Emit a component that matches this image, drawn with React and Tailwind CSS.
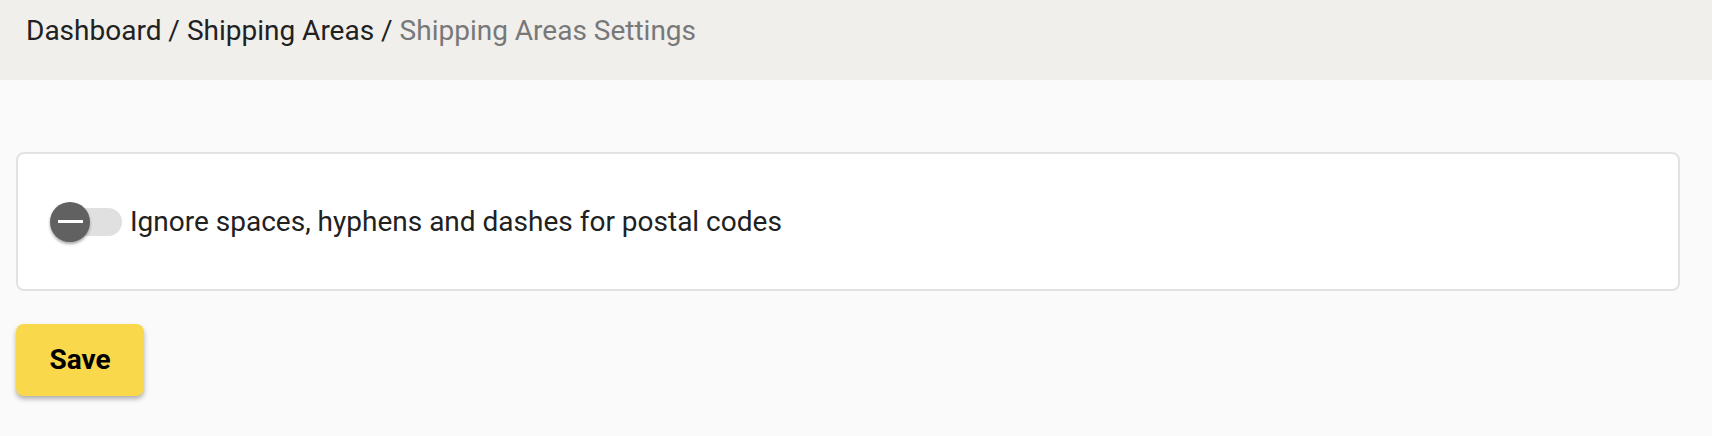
export default function App() {
  return (
    <div className="min-h-[436px] bg-[#fafafa] font-['Roboto',sans-serif]">
      {/* Breadcrumb bar */}
      <div className="h-20 bg-[#f0efec] pl-[26px] pt-[10px] text-[28px] leading-[42px]">
        <span className="text-[#212121]">Dashboard</span>
        <span className="text-[#212121]"> / </span>
        <span className="text-[#212121]">Shipping Areas</span>
        <span className="text-[#212121]"> / </span>
        <span className="text-[#787878]">Shipping Areas Settings</span>
      </div>

      <div className="pl-4 pr-8 pt-[72px]">
        {/* Settings card */}
        <div className="flex h-[139px] items-center rounded-lg border-2 border-[#e2e2e2] bg-white pl-8">
          <div className="relative h-10 w-[72px] shrink-0">
            <div className="absolute left-[6px] top-[6px] h-7 w-[66px] rounded-full bg-[#e0e0e0]" />
            <div className="absolute left-0 top-0 flex h-10 w-10 items-center justify-center rounded-full bg-[#616161] shadow-[0_2px_3px_rgba(0,0,0,0.35)]">
              <div className="h-[3px] w-[25px] bg-white" />
            </div>
          </div>
          <span className="ml-2 text-[28px] leading-[42px] text-[#212121]">
            Ignore spaces, hyphens and dashes for postal codes
          </span>
        </div>

        <button className="mt-[33px] flex h-[72px] w-32 items-center justify-center rounded-lg bg-[#f9d94b] text-[28px] font-bold text-black shadow-[0_3px_5px_rgba(0,0,0,0.3)]">
          Save
        </button>
      </div>
    </div>
  );
}
